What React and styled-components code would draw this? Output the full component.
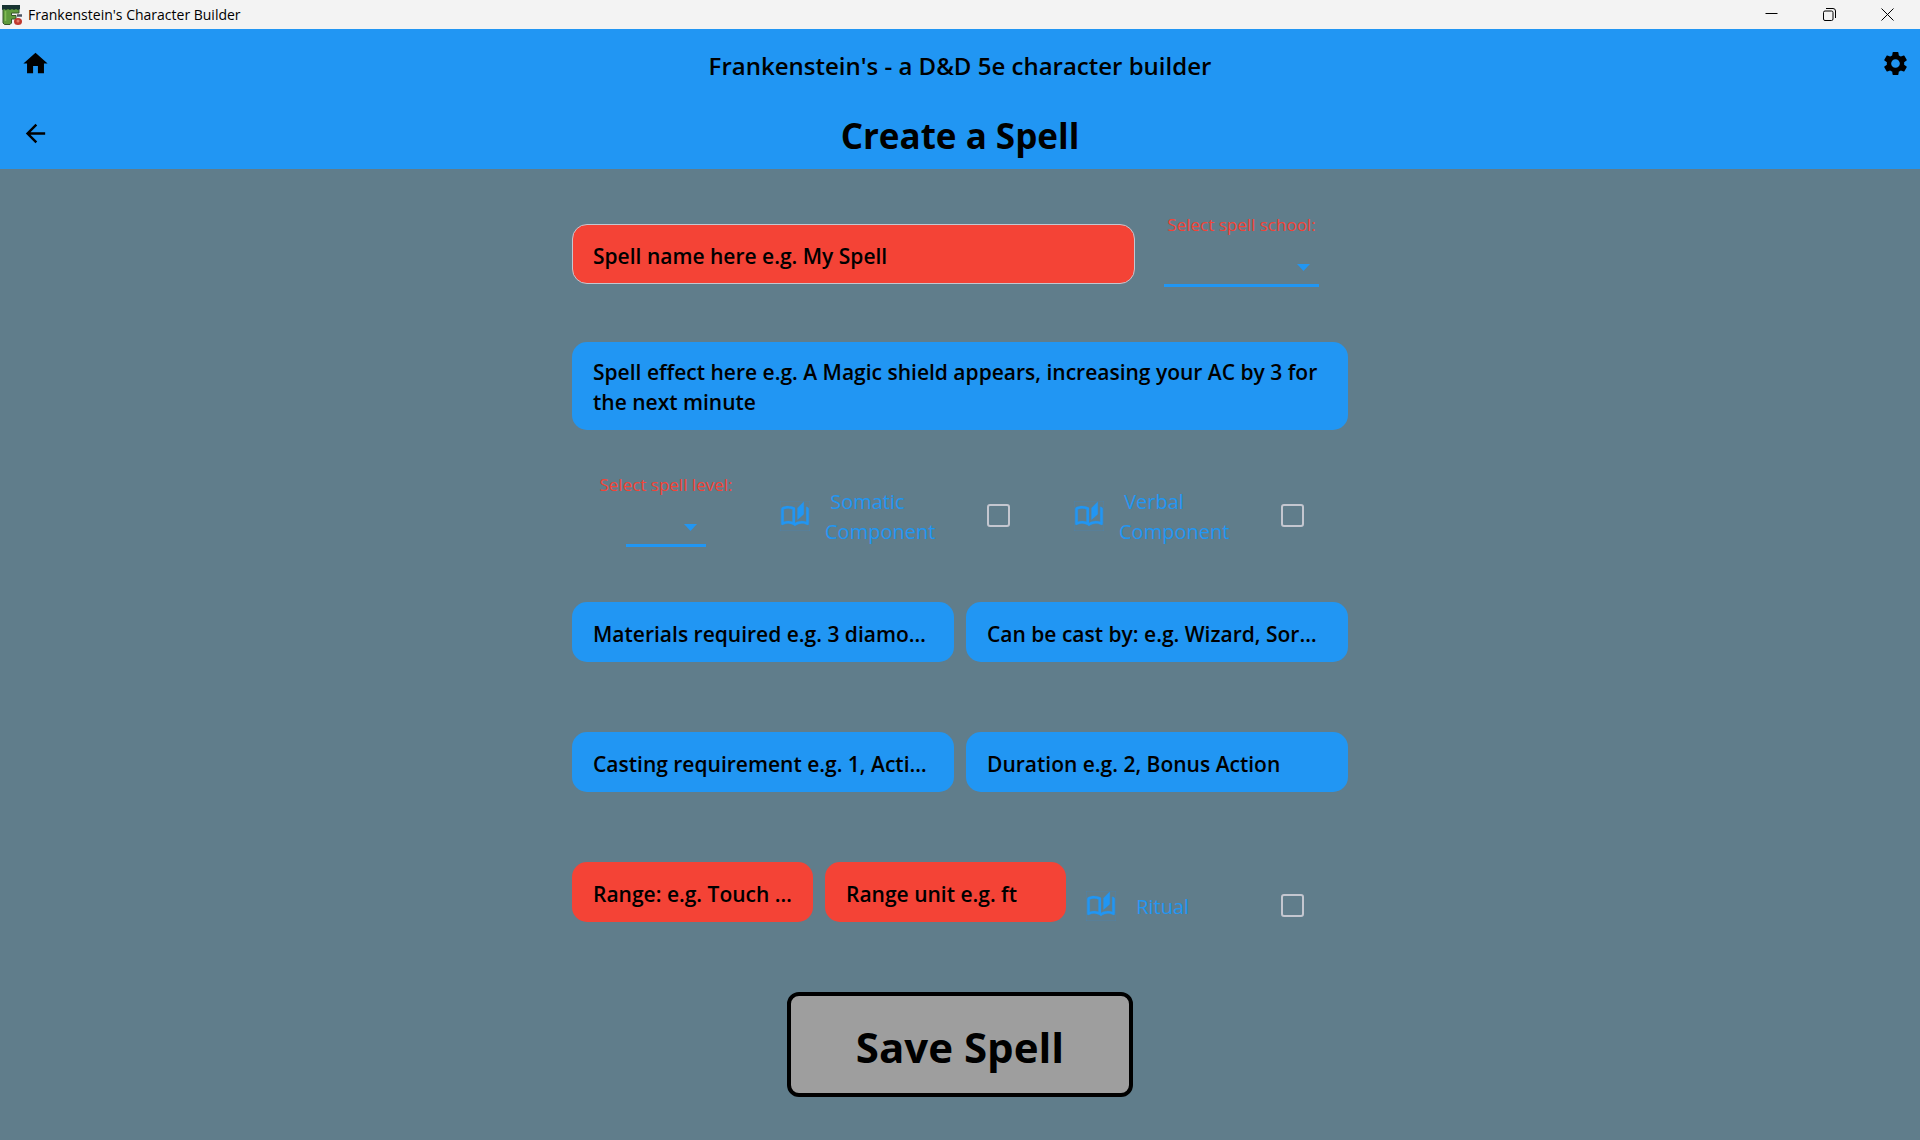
import React from "react";
import styled, { createGlobalStyle } from "styled-components";
import { MdHome, MdArrowBack, MdSettings, MdOutlineAutoStories } from "react-icons/md";

const color = {
  blue: "#2196f3",
  red: "#f44336",
  slate: "#607d8b",
  grey: "#9e9e9e",
  outline: "#c4c7d0",
  chrome: "#f3f3f3",
};

const GlobalStyle = createGlobalStyle`
  *, *::before, *::after { box-sizing: border-box; }
  body {
    margin: 0;
    min-height: 100vh;
    background: ${color.slate};
    color: #000;
    font-family: "Open Sans", "Noto Sans", sans-serif;
  }
  button, input, select, textarea { font: inherit; color: inherit; }
`;

const TitleBar = styled.div`
  display: flex;
  align-items: center;
  gap: 6px;
  height: 29px;
  padding: 0 4px 0 2px;
  background: ${color.chrome};
  font-size: 14px;
`;

const WindowTitle = styled.span`
  flex: 1;
`;

const WindowControls = styled.div`
  display: flex;
`;

const WindowButton = styled.button`
  display: grid;
  place-items: center;
  width: 58px;
  height: 28px;
  padding: 0;
  border: 0;
  background: none;
`;

const AppBar = styled.header`
  background: ${color.blue};
`;

const BarRow = styled.div`
  display: grid;
  grid-template-columns: 50px 1fr 50px;
  align-items: center;
  height: 70px;
`;

const AppName = styled.div`
  padding-top: 2px;
  text-align: center;
  font-size: 24px;
  font-weight: 600;
`;

const PageTitle = styled.h1`
  margin: 0;
  padding-top: 3px;
  text-align: center;
  font-size: 35px;
  line-height: 48px;
  font-weight: 700;
`;

const IconButton = styled.button`
  display: grid;
  place-items: center;
  justify-self: end;
  width: 30px;
  height: 30px;
  margin: 0 ${(p) => (p.$side === "right" ? 10 : 0)}px 2px 0;
  padding: 0;
  border: 0;
  background: none;
  font-size: 29px;
`;

const Form = styled.form`
  display: flex;
  flex-direction: column;
  gap: 42px;
  max-width: 776px;
  margin: 0 auto;
  padding: 43px 0;
`;

const Row = styled.div`
  display: grid;
  grid-template-columns: ${(p) => p.$columns || "1fr"};
  column-gap: ${(p) => p.$gap ?? 12}px;
  align-items: start;
  min-height: 88px;
`;

const TextField = styled.input`
  width: 100%;
  min-width: 0;
  height: 60px;
  margin-top: ${(p) => (p.$outlined ? 12 : 0)}px;
  padding: 3px ${(p) => (p.$compact ? 16 : 24)}px 0 ${(p) => (p.$outlined ? 20 : 21)}px;
  border: ${(p) => (p.$outlined ? `1px solid ${color.outline}` : 0)};
  border-radius: 15px;
  outline: 0;
  background: ${(p) => (p.$required ? color.red : color.blue)};
  font-size: 21px;
  font-weight: 600;
  text-overflow: ellipsis;

  &::placeholder {
    color: #000;
    opacity: 1;
  }
`;

const TextArea = styled.textarea`
  display: block;
  width: 100%;
  height: 88px;
  padding: 15px 16px 13px 21px;
  border: 0;
  border-radius: 15px;
  outline: 0;
  resize: none;
  overflow: hidden;
  background: ${color.blue};
  font-size: 21px;
  line-height: 30px;
  font-weight: 600;

  &::placeholder {
    color: #000;
    opacity: 1;
  }
`;

const SelectField = styled.div`
  display: flex;
  flex-direction: column;
  align-items: center;
  gap: 3px;
`;

const SelectLabel = styled.label`
  color: ${color.red};
  font-size: 17px;
  line-height: 26px;
`;

const SelectBox = styled.div`
  position: relative;
  width: ${(p) => p.$width}px;
`;

const Select = styled.select`
  display: block;
  width: 100%;
  height: 46px;
  padding: 0 28px 0 4px;
  border: 0;
  border-bottom: 3px solid ${color.blue};
  border-radius: 0;
  outline: 0;
  appearance: none;
  background: transparent;
  color: ${color.blue};
  font-size: 17px;
`;

const Caret = styled.svg`
  position: absolute;
  right: 9px;
  bottom: 16px;
  width: 13px;
  height: 7px;
  fill: ${color.blue};
  pointer-events: none;
`;

const Tile = styled.label`
  display: grid;
  grid-template-columns: 30px 1fr 23px;
  column-gap: 15px;
  align-items: center;
  height: 87px;
  padding: 0 44px 0 20px;
  color: ${color.blue};
  font-size: 20px;
  line-height: 30px;
`;

const TileIcon = styled(MdOutlineAutoStories)`
  width: 30px;
  height: 30px;
  stroke: currentColor;
  stroke-width: 0.2px;
`;

const TileText = styled.span`
  padding-top: 3px;
  white-space: pre;
`;

const Checkbox = styled.input`
  width: 23px;
  height: 23px;
  margin: 0;
  border: 2px solid ${color.outline};
  border-radius: 3px;
  appearance: none;

  &:checked {
    background: ${color.blue};
  }
`;

const SaveButton = styled.button`
  align-self: center;
  width: 346px;
  height: 105px;
  padding: 4px 0 0;
  border: 4px solid #000;
  border-radius: 12px;
  background: ${color.grey};
  font-size: 42px;
  font-weight: 700;
`;

function AppLogo() {
  return (
    <svg width="20" height="20" viewBox="0 0 20 20" aria-hidden="true">
      <path
        d="M1 3h16v5H9.500v2.500H14v3.500H9.500v4l-1.500 1.500H2.500L1 18z"
        fill="#5f9a3c"
        stroke="#34552a"
      />
      <path d="M3.500 6v10" stroke="#83bb55" strokeWidth="1.500" />
      <path d="M0 0h18v4l-2 1-2-1-2 1-2-1-2 1-2-1-2 1-2-1-2 1z" fill="#173331" />
      <path d="M15 10.500h5" stroke="#4b5563" strokeWidth="2.500" />
      <ellipse cx="16" cy="16.500" rx="4" ry="3.500" fill="#c0392f" />
      <circle cx="16" cy="16" r="1.500" fill="#e07a68" />
    </svg>
  );
}

function WindowGlyph({ children }) {
  return (
    <svg width="13" height="13" viewBox="0 0 13 13" fill="none" stroke="#000" aria-hidden="true">
      {children}
    </svg>
  );
}

function SelectInput({ id, label, width }) {
  return (
    <SelectField>
      <SelectLabel htmlFor={id}>{label}</SelectLabel>
      <SelectBox $width={width}>
        <Select id={id} defaultValue="">
          <option value="" />
        </Select>
        <Caret viewBox="0 0 13 7" aria-hidden="true">
          <path d="M0 0h13L6.500 7z" />
        </Caret>
      </SelectBox>
    </SelectField>
  );
}

function CheckTile({ children }) {
  return (
    <Tile>
      <TileIcon aria-hidden="true" />
      <TileText>{children}</TileText>
      <Checkbox type="checkbox" />
    </Tile>
  );
}

function Field(props) {
  return <TextField type="text" aria-label={props.placeholder} {...props} />;
}

export default function App() {
  return (
    <>
      <GlobalStyle />
      <TitleBar>
        <AppLogo />
        <WindowTitle>Frankenstein's Character Builder</WindowTitle>
        <WindowControls>
          <WindowButton type="button" aria-label="Minimize">
            <WindowGlyph>
              <path d="M0.500 5.500h12" />
            </WindowGlyph>
          </WindowButton>
          <WindowButton type="button" aria-label="Restore">
            <WindowGlyph>
              <rect x="0.500" y="3" width="9.500" height="9.500" rx="1.500" />
              <path d="M3 0.500h7a2.500 2.500 0 0 1 2.500 2.500v7" />
            </WindowGlyph>
          </WindowButton>
          <WindowButton type="button" aria-label="Close">
            <WindowGlyph>
              <path d="M0.500 0.500l12 12M12.500 0.500l-12 12" />
            </WindowGlyph>
          </WindowButton>
        </WindowControls>
      </TitleBar>
      <AppBar>
        <BarRow>
          <IconButton type="button" aria-label="Home">
            <MdHome />
          </IconButton>
          <AppName>Frankenstein's - a D&amp;D 5e character builder</AppName>
          <IconButton type="button" aria-label="Settings" $side="right">
            <MdSettings />
          </IconButton>
        </BarRow>
        <BarRow>
          <IconButton type="button" aria-label="Back">
            <MdArrowBack />
          </IconButton>
          <PageTitle>Create a Spell</PageTitle>
        </BarRow>
      </AppBar>
      <Form>
        <Row $columns="563px 1fr" $gap={0}>
          <Field $required $outlined placeholder="Spell name here e.g. My Spell" />
          <SelectInput id="spell-school" label="Select spell school:" width={155} />
        </Row>
        <Row>
          <TextArea
            aria-label="Spell effect"
            placeholder="Spell effect here e.g. A Magic shield appears, increasing your AC by 3 for the next minute"
          />
        </Row>
        <Row $columns="188px 1fr 1fr" $gap={0}>
          <SelectInput id="spell-level" label="Select spell level:" width={80} />
          <CheckTile>{" Somatic\nComponent"}</CheckTile>
          <CheckTile>{" Verbal\nComponent"}</CheckTile>
        </Row>
        <Row $columns="1fr 1fr">
          <Field placeholder="Materials required e.g. 3 diamonds" />
          <Field placeholder="Can be cast by: e.g. Wizard, Sorcerer" />
        </Row>
        <Row $columns="1fr 1fr">
          <Field placeholder="Casting requirement e.g. 1, Action" />
          <Field placeholder="Duration e.g. 2, Bonus Action" />
        </Row>
        <Row $columns="494px 1fr" $gap={0}>
          <Row $columns="1fr 1fr">
            <Field $required $compact placeholder="Range: e.g. Touch or 30" />
            <Field $required $compact placeholder="Range unit e.g. ft" />
          </Row>
          <CheckTile>{" Ritual"}</CheckTile>
        </Row>
        <SaveButton type="button">Save Spell</SaveButton>
      </Form>
    </>
  );
}
